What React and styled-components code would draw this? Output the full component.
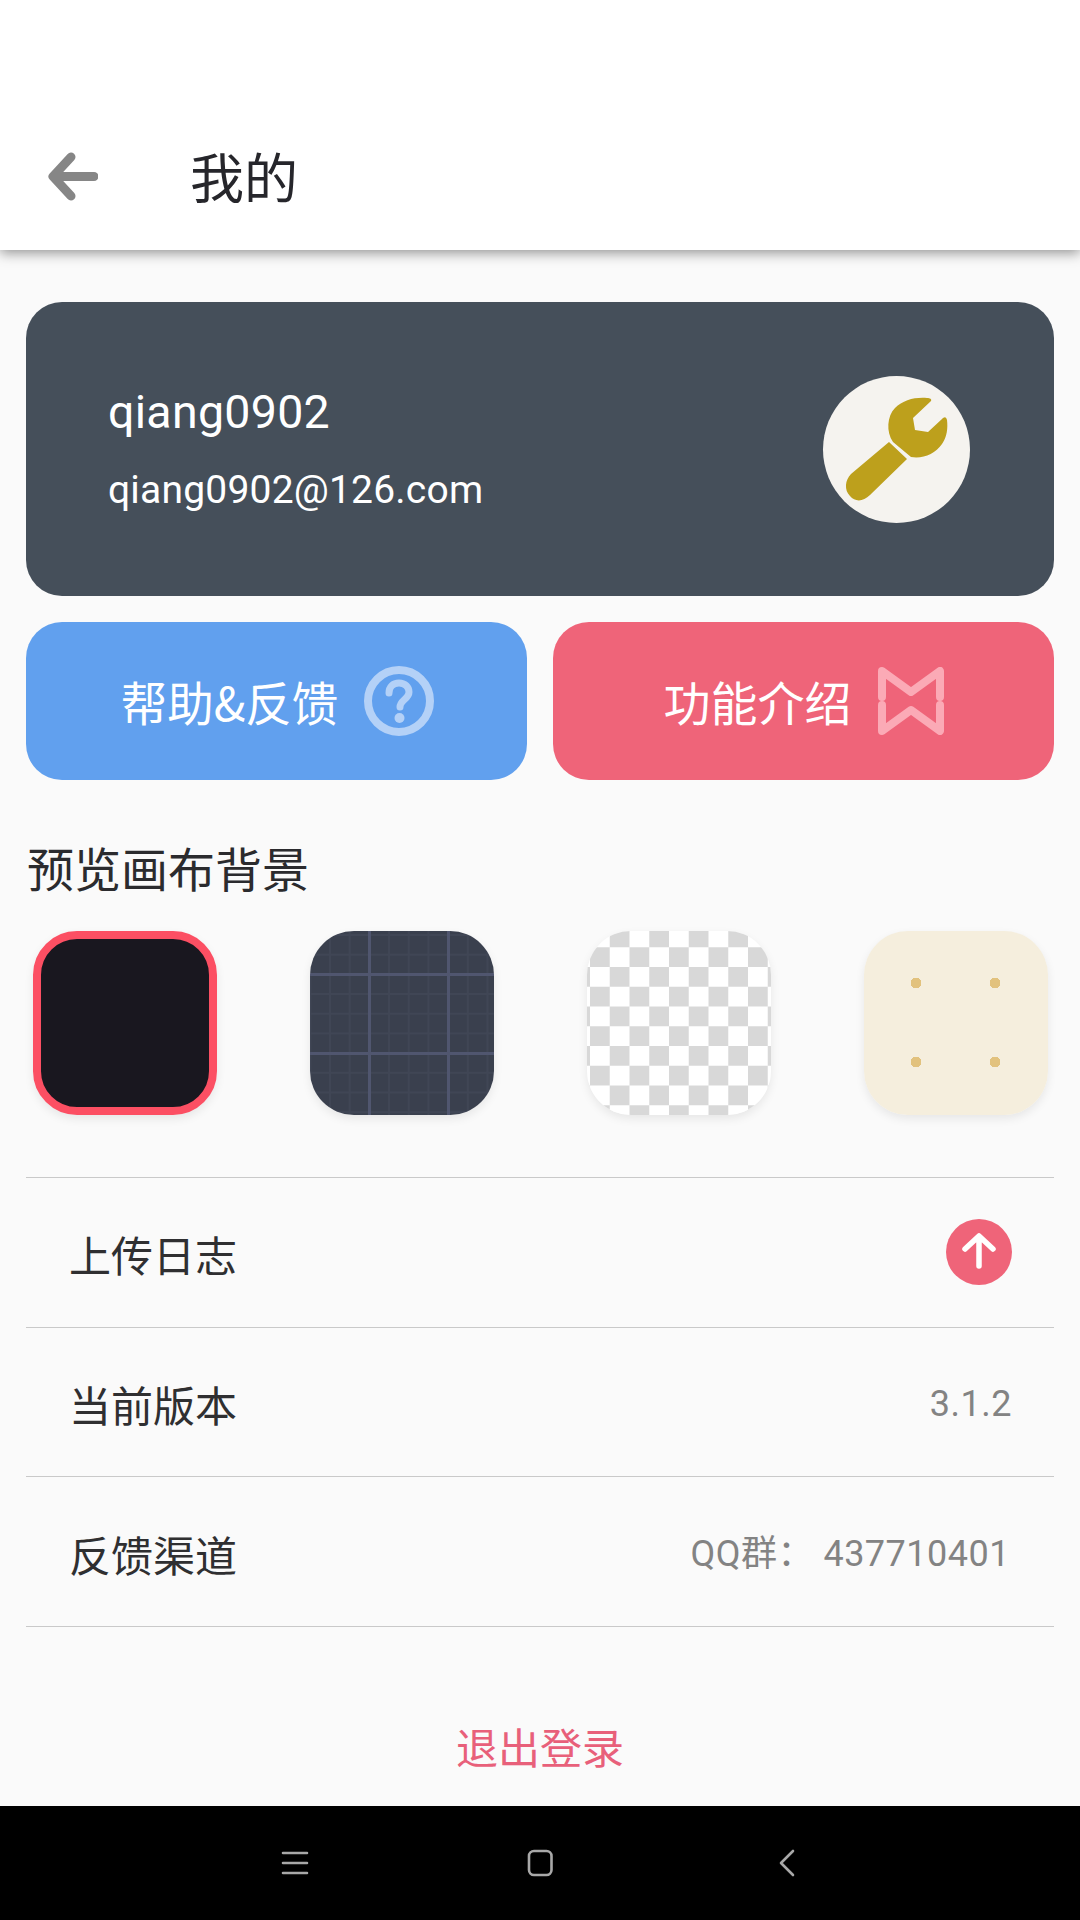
import React from "react";
import styled, { createGlobalStyle, css } from "styled-components";

const Global = createGlobalStyle`
  html, body { margin: 0; padding: 0; background: #fafafa; }
  body { font-family: Roboto, "Noto Sans CJK SC", sans-serif; }
  * { box-sizing: border-box; }
`;
const Page = styled.div`
  width: 1080px; height: 1920px; display: flex; flex-direction: column; background: #fafafa; overflow: hidden;
`;
const Header = styled.header`
  height: 250px; flex: none; background: #fff; display: flex; align-items: flex-end; padding: 0 0 37px 48px;
  box-shadow: 0 3px 12px rgba(0,0,0,.42); position: relative; z-index: 1;
`;
const BackIcon = styled.svg`width: 50px; height: 50px; flex: none; margin-bottom: 11px;`;
const Title = styled.h1`
  margin: 0 0 2px 92px; font-size: 54px; line-height: 70px; font-weight: 400; color: #26262b; font-family: "Noto Sans CJK SC", sans-serif;
`;
const Main = styled.main`flex: 1; display: flex; flex-direction: column; padding: 52px 26px 0;`;
const UserCard = styled.section`
  height: 294px; background: #454f5a; border-radius: 36px; display: flex; align-items: center; justify-content: space-between; padding: 0 84px 0 82px;
`;
const UserInfo = styled.div`display: flex; flex-direction: column; color: #fff; margin-top: -1px;`;
const UserName = styled.div`font-size: 46.5px; line-height: 56px; letter-spacing: .3px;`;
const UserMail = styled.div`font-size: 39px; line-height: 48px; margin-top: 26px; letter-spacing: .2px;`;
const Avatar = styled.div`width: 147px; height: 147px; border-radius: 50%; background: #f5f3ef; display: flex; align-items: center; justify-content: center;`;
const Buttons = styled.div`display: grid; grid-template-columns: 1fr 1fr; gap: 26px; margin-top: 26px;`;
const ActionButton = styled.button`
  height: 158px; border: 0; border-radius: 36px; background: ${p => p.$bg}; color: #fff; display: flex; align-items: center; justify-content: center; gap: ${p => p.$gap}px;
  font: 400 ${p => p.$size}px/60px "Noto Sans CJK SC", sans-serif; padding: 0 0 0 ${p => p.$shift}px;
`;
const SectionTitle = styled.h2`margin: 57px 0 0 1px; font-size: 47px; line-height: 60px; font-weight: 400; color: #2b2b2e; font-family: "Noto Sans CJK SC", sans-serif;`;
const Swatches = styled.div`display: flex; justify-content: space-between; padding: 0 6px 0 7px; margin-top: 34px;`;
const Swatch = styled.div`
  width: 184px; height: 184px; border-radius: 44px; box-shadow: 0 4px 10px rgba(0,0,0,.08); flex: none;
  border: ${p => p.$selected ? "8px solid #fc4f63" : "0"};
  background: ${p => p.$bg};
  ${p => p.$size && css`background-size: ${p.$size}; background-position: ${p.$pos};`}
`;
const List = styled.div`margin-top: 62px; border-top: 1px solid #c9c9c9;`;
const Row = styled.div`
  height: 149.7px; border-bottom: 1px solid #c9c9c9; display: flex; align-items: center; justify-content: space-between; padding: 0 42px 0 43px;
`;
const RowLabel = styled.span`font: 400 42px/56px "Noto Sans CJK SC", sans-serif; color: #2f2f31; margin-top: 4px;`;
const RowValue = styled.span`font: 400 36px/48px Roboto, "Noto Sans CJK SC", sans-serif; color: #838383; letter-spacing: .5px; margin-top: 4px; margin-right: ${p => p.$mr || 0}px;`;
const Logout = styled.div`margin-top: 91px; text-align: center; font: 400 42px/56px "Noto Sans CJK SC", sans-serif; color: #e8607a;`;
const NavBar = styled.nav`
  height: 114px; flex: none; background: #000; display: grid; grid-template-columns: repeat(3, 245px); align-items: center; justify-items: center; justify-content: center;
`;
const NavIcon = styled.svg`width: 30px; height: 30px; display: block;`;

const gridBg = [
  "linear-gradient(#50566f,#50566f) 0 42px/100% 3px no-repeat",
  "linear-gradient(#50566f,#50566f) 0 121px/100% 3px no-repeat",
  "linear-gradient(90deg,#50566f,#50566f) 58px 0/3px 100% no-repeat",
  "linear-gradient(90deg,#50566f,#50566f) 137px 0/3px 100% no-repeat",
  "linear-gradient(#404655 1.6px,transparent 0) 0 3px/100% 19.7px",
  "linear-gradient(90deg,#404655 1.6px,transparent 0) 19px 0/19.7px 100%",
  "#3a404e",
].join(",");
const checkerBg = "repeating-conic-gradient(#d8d8d8 0 25%, #ffffff 0 50%)";
const dot = (x, y) => `radial-gradient(circle 5.5px at ${x}px ${y}px,#e2c27e 96%,transparent 100%)`;
const dotsBg = [dot(52, 52), dot(131, 52), dot(52, 131), dot(131, 131), "linear-gradient(#f5eedd,#f5eedd)"].join(",");

export default function App() {
  return (
    <Page>
      <Global />
      <Header>
        <BackIcon viewBox="0 0 50 50">
          <path d="M23 5 5 24.500 23 44M6 24.500h40" fill="none" stroke="#868686" strokeWidth="9" strokeLinecap="round" strokeLinejoin="round" />
        </BackIcon>
        <Title>我的</Title>
      </Header>
      <Main>
        <UserCard>
          <UserInfo>
            <UserName>qiang0902</UserName>
            <UserMail>qiang0902@126.com</UserMail>
          </UserInfo>
          <Avatar>
            <svg width="147" height="147" viewBox="0 0 147 147">
              <path d="M66 66 84 83 47 119C40 126 32 126 27 120 21 114 22 104 28 98Z" fill="#bda01c" />
              <path d="M108 25C109 23 107 22 104 22 92 21 80 24 72 32 64 40 63 56 70 66L88 81C100 83 112 78 119 68 124 61 125 52 124 44 123 40 121 41 119 43L105 56 92 54 90 42Z" fill="#bda01c" />
            </svg>
          </Avatar>
        </UserCard>
        <Buttons>
          <ActionButton $bg="#61a0ee" $size={46.5} $gap={26} $shift={2}>
            帮助&amp;反馈
            <svg width="70" height="70" viewBox="0 0 70 70">
              <circle cx="35" cy="35" r="31" fill="none" stroke="#b4d1f7" strokeWidth="8" />
              <path d="M25 27c0-6 4-10 10-10s10 4 10 9c0 7-9 8-9 15" fill="none" stroke="#b4d1f7" strokeWidth="7" strokeLinecap="round" />
              <circle cx="35.500" cy="52" r="5" fill="#b4d1f7" />
            </svg>
          </ActionButton>
          <ActionButton $bg="#ef6479" $size={47} $gap={26} $shift={0}>
            功能介绍
            <svg width="66" height="68" viewBox="0 0 66 68">
              <path d="M4 30V4L33 25 62 4V30M4 38V64L33 43 62 64V38" fill="none" stroke="#fbaab6" strokeWidth="8" strokeLinecap="round" strokeLinejoin="round" />
            </svg>
          </ActionButton>
        </Buttons>
        <SectionTitle>预览画布背景</SectionTitle>
        <Swatches>
          <Swatch $selected $bg="#19171f" />
          <Swatch $bg={gridBg} />
          <Swatch $bg={checkerBg} $size="39.500px 39.500px" $pos="3px -3.500px" />
          <Swatch $bg={dotsBg} />
        </Swatches>
        <List>
          <Row>
            <RowLabel>上传日志</RowLabel>
            <svg width="66" height="66" viewBox="0 0 66 66">
              <circle cx="33" cy="33" r="33" fill="#ef6479" />
              <path d="M33 47V18M19 30 33 17 47 30" fill="none" stroke="#fff" strokeWidth="5.500" strokeLinecap="round" strokeLinejoin="round" />
            </svg>
          </Row>
          <Row>
            <RowLabel>当前版本</RowLabel>
            <RowValue>3.1.2</RowValue>
          </Row>
          <Row>
            <RowLabel>反馈渠道</RowLabel>
            <RowValue $mr={2}>QQ群： 437710401</RowValue>
          </Row>
        </List>
        <Logout>退出登录</Logout>
      </Main>
      <NavBar>
        <NavIcon viewBox="0 0 30 30">
          <path d="M3 5h24M3 15h24M3 25h24" stroke="#a8a8a8" strokeWidth="2.600" fill="none" strokeLinecap="round" />
        </NavIcon>
        <NavIcon viewBox="0 0 30 30">
          <rect x="4" y="3" width="22.500" height="24" rx="5" stroke="#a8a8a8" strokeWidth="2.600" fill="none" />
        </NavIcon>
        <NavIcon viewBox="0 0 30 30">
          <path d="M23 3 11 15l12 12" stroke="#a8a8a8" strokeWidth="2.600" fill="none" strokeLinecap="round" strokeLinejoin="round" />
        </NavIcon>
      </NavBar>
    </Page>
  );
}
